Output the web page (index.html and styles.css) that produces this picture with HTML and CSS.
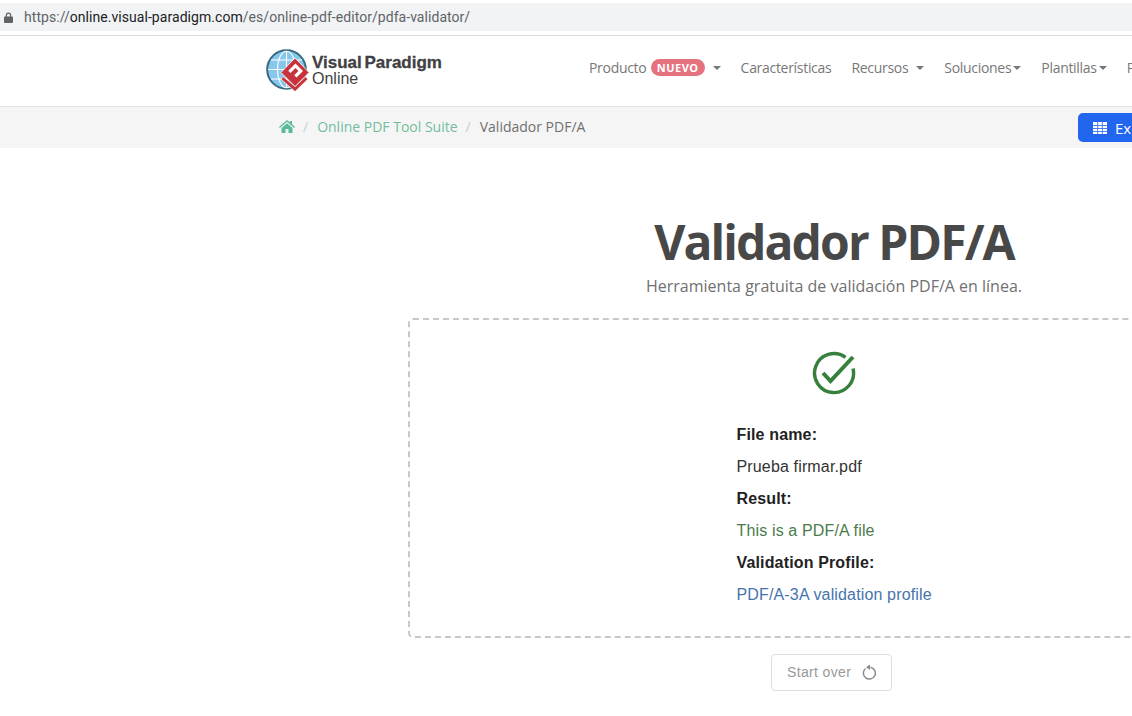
FILE: index.html
```html
<!DOCTYPE html>
<html lang="es">
<head>
    <meta charset="UTF-8">
    <title>Validador PDF/A</title>
    <link rel="stylesheet" href="styles.css">
</head>
<body>
    <div class="addressbar">
        <svg class="lock" viewBox="0 0 10 12"><path d="M2 5V3.500a3 3 0 0 1 6 0V5h1a1 1 0 0 1 1 1v5a1 1 0 0 1-1 1H1a1 1 0 0 1-1-1V6a1 1 0 0 1 1-1zm1.300 0h3.400V3.500a1.700 1.700 0 0 0-3.400 0z"/></svg>
        <span class="url"><span class="dim">https://</span>online.visual-paradigm.com<span class="dim">/es/online-pdf-editor/pdfa-validator/</span></span>
    </div>

    <header class="navbar">
        <a class="logo">
            <svg class="logo-mark" viewBox="0 0 44 44">
                <circle cx="20.500" cy="20.500" r="19.300" fill="#86c8ec" stroke="#3a6a80" stroke-width="2"/>
                <g fill="none" stroke="#fff" stroke-width="1.100">
                    <ellipse cx="20.500" cy="20.500" rx="9" ry="18.300"/>
                    <path d="M20.500 2v37M2 20.500h37M5 11h31M5 30h31"/>
                </g>
                <path d="M15 30l14 12.500L42 30l-2.500-2L29 37.500 17.500 28z" fill="#c8323a" stroke="#fff" stroke-width=".6"/>
                <path d="M29 9l14 14.500-14 14-14-14z" fill="#c8323a" stroke="#fff" stroke-width=".8"/>
                <path d="M29.500 14.500l7.500 7.500-6.500 6.500-2.300-2.300 4.200-4.200-2.900-2.900-5 5-2.300-2.300z" fill="#fff"/>
            </svg>
            <span class="logo-text">
                <span class="logo-name">Visual Paradigm</span>
                <span class="logo-sub">Online</span>
            </span>
        </a>
        <nav class="menu">
            <a class="menu-item">Producto <span class="badge">NUEVO</span><i class="caret caret-far"></i></a>
            <a class="menu-item">Características</a>
            <a class="menu-item">Recursos<i class="caret caret-far"></i></a>
            <a class="menu-item">Soluciones<i class="caret"></i></a>
            <a class="menu-item">Plantillas<i class="caret"></i></a>
            <a class="menu-item">Precios</a>
        </nav>
    </header>

    <div class="crumbbar">
        <ol class="breadcrumb">
            <li>
                <svg class="home" viewBox="0 0 16 13"><path d="M8 0l3 2.600V1h2v3.300L16 7l-.8.900L8 1.700.8 7.900 0 7zM2.500 8L8 3.200 13.500 8v5H9.500V9h-3v4H2.500z"/></svg>
            </li>
            <li class="sep">/</li>
            <li><a class="crumb-link">Online PDF Tool Suite</a></li>
            <li class="sep">/</li>
            <li class="crumb-current">Validador PDF/A</li>
        </ol>
        <button class="explore">
            <svg class="grid-icon" viewBox="0 0 14 12"><path d="M0 0h14v12H0z" fill="#fff"/><path d="M0 3.500h14M0 6.500h14M0 9.500h14M4.670 0v12M9.330 0v12" stroke="#2266f0" stroke-width=".8"/></svg>
            Explorar
        </button>
    </div>

    <main class="content">
        <h1 class="title">Validador PDF/A</h1>
        <p class="subtitle">Herramienta gratuita de validación PDF/A en línea.</p>

        <section class="dropzone">
            <svg class="ok-icon" viewBox="0 0 44 44" fill="none" stroke="#37803b" stroke-width="3.400">
                <path d="M33.500 6.300A19.500 19.500 0 1 0 41 17.500"/>
                <path d="M11 22l7.500 8L41 6" stroke-width="4"/>
            </svg>
            <dl class="result">
                <dt>File name:</dt>
                <dd>Prueba firmar.pdf</dd>
                <dt>Result:</dt>
                <dd class="good">This is a PDF/A file</dd>
                <dt>Validation Profile:</dt>
                <dd class="info">PDF/A-3A validation profile</dd>
            </dl>
        </section>

        <button class="restart">
            <span class="restart-label">Start over</span>
            <svg class="restart-icon" viewBox="0 0 14 16" fill="none" stroke="#8a8a8a" stroke-width="1.500">
                <path d="M3.500 4.500a6 6 0 1 0 5-1.300"/>
                <path d="M8 .500v5.500L4 3.200z" fill="#8a8a8a" stroke="none"/>
            </svg>
        </button>
    </main>
</body>
</html>
```

FILE: styles.css
```css
html, body {
    margin: 0;
    height: 716px;
    overflow: hidden;
}
body {
    width: 1132px;
    background-color: #fff;
    font-family: "Open Sans", sans-serif;
    color: #555;
}
a {
    text-decoration: none;
}
.addressbar {
    display: flex;
    align-items: center;
    height: 28px;
    margin-top: 3px;
    padding-left: 4px;
    background-color: #f1f3f4;
}
.lock {
    width: 9px;
    height: 11px;
    fill: #5f6368;
}
.url {
    margin-left: 11px;
    font-family: Roboto, sans-serif;
    font-size: 14px;
    letter-spacing: 0.05px;
    color: #202124;
}
.dim {
    color: #5f6368;
}
.navbar {
    display: flex;
    align-items: center;
    height: 70px;
    margin-top: 4px;
    padding-left: 266px;
    border-top: 1px solid #dedede;
    border-bottom: 1px solid #e4e4e4;
}
.logo {
    display: flex;
    align-items: center;
    flex: none;
    width: 323px;
}
.logo-mark {
    width: 44px;
    height: 44px;
    flex: none;
}
.logo-text {
    display: flex;
    flex-direction: column;
    margin-left: 2px;
    font-family: "Liberation Sans", Arial, sans-serif;
    line-height: 16px;
    color: #3f3f44;
}
.logo-name {
    font-size: 17px;
    font-weight: bold;
    word-spacing: -2px;
    -webkit-text-stroke: 0.3px #3f3f44;
}
.logo-sub {
    font-size: 16px;
}
.menu {
    display: flex;
    align-items: center;
    flex: none;
    gap: 20px;
    padding-bottom: 7px;
    font-size: 14px;
    letter-spacing: -0.3px;
}
.menu-item {
    display: flex;
    align-items: center;
    color: #777;
    white-space: pre;
}
.badge {
    margin-left: 1px;
    padding: 0 6px;
    border-radius: 9px;
    background-color: #e5737f;
    color: #fff;
    font-size: 11px;
    font-weight: bold;
    letter-spacing: 0.5px;
    line-height: 17px;
}
.caret {
    width: 0;
    height: 0;
    margin-left: 2px;
    border-top: 4px solid #777;
    border-left: 4px solid transparent;
    border-right: 4px solid transparent;
}
.caret-far {
    margin-left: 8px;
}
.crumbbar {
    display: flex;
    align-items: center;
    height: 41px;
    padding-left: 279px;
    background-color: #f5f5f5;
    font-size: 14px;
}
.breadcrumb {
    display: flex;
    align-items: center;
    flex: none;
    gap: 8px;
    width: 799px;
    margin: 0;
    padding: 0 0 2px;
    list-style: none;
}
.breadcrumb li {
    display: flex;
}
.home {
    width: 16px;
    height: 13px;
    fill: #5cb896;
}
.sep {
    color: #ccc;
}
.sep + li {
    margin-left: 1px;
}
.crumb-link {
    color: #72bd9f;
}
.crumb-current {
    color: #707070;
}
.explore {
    display: flex;
    align-items: center;
    flex: none;
    gap: 8px;
    width: 130px;
    height: 29px;
    padding: 0 15px;
    border: 0;
    border-radius: 5px;
    background-color: #2266f0;
    color: #fff;
    font-family: "Open Sans", sans-serif;
    font-size: 15px;
}
.grid-icon {
    width: 14px;
    height: 12px;
    flex: none;
}
.content {
    display: flex;
    flex-direction: column;
    align-items: center;
    width: 852px;
    margin-left: 408px;
}
.title {
    margin: 64px 0 0;
    font-size: 48px;
    font-weight: bold;
    line-height: 60px;
    letter-spacing: -1.9px;
    color: #484848;
}
.subtitle {
    margin: 2px 0 0;
    font-size: 16px;
    line-height: 24px;
    color: #707070;
}
.dropzone {
    display: flex;
    flex-direction: column;
    align-items: center;
    box-sizing: border-box;
    width: 852px;
    height: 320px;
    margin-top: 20px;
    padding-top: 31px;
    border: 2px dashed #c8c8c8;
    border-radius: 5px;
}
.ok-icon {
    width: 44px;
    height: 44px;
    flex: none;
}
.result {
    width: 195px;
    margin: 24px 0 0;
    font-family: "Liberation Sans", Arial, sans-serif;
    font-size: 16px;
    line-height: 32px;
    letter-spacing: 0.15px;
    color: #222;
    white-space: nowrap;
}
.result dt {
    font-weight: bold;
}
.result dd {
    margin: 0;
    color: #333;
}
.result .good {
    color: #4a7c4b;
}
.result .info {
    color: #4674ad;
}
.restart {
    display: flex;
    align-items: center;
    box-sizing: border-box;
    gap: 11px;
    width: 121px;
    height: 37px;
    margin-top: 16px;
    margin-right: 5px;
    padding: 0 14px 2px 15px;
    border: 1px solid #ddd;
    border-radius: 4px;
    background-color: #fff;
    color: #999;
    font-family: "Liberation Sans", Arial, sans-serif;
    font-size: 14px;
    letter-spacing: 0.35px;
}
.restart-label {
    white-space: nowrap;
}
.restart-icon {
    width: 14px;
    height: 16px;
    flex: none;
}
```
